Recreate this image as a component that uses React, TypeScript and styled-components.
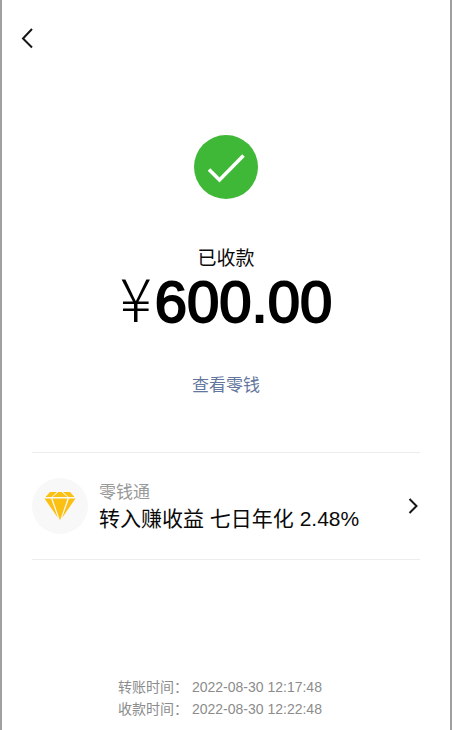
import React from "react";
import styled, { createGlobalStyle } from "styled-components";

const GlobalStyle = createGlobalStyle`
  *, *::before, *::after { box-sizing: border-box; }
  body {
    margin: 0;
    background: #fff;
    color: #0a0a0a;
    font-family: "Liberation Sans", "Noto Sans CJK SC", sans-serif;
  }
`;

const Screen = styled.main`
  display: flex;
  flex-direction: column;
  min-height: 100vh;
  padding: 0 30px 10px;
  border: solid #a0a0a0;
  border-width: 0 2px;
`;

const NavBar = styled.nav`
  display: flex;
  height: 76px;
  margin-left: -16px;
  align-items: center;
`;

const BackButton = styled.button`
  display: flex;
  padding: 4px;
  border: 0;
  background: none;
  color: #161616;
  cursor: pointer;
`;

const Result = styled.section`
  display: flex;
  flex-direction: column;
  align-items: center;
  padding: 58px 0 54px;
`;

const Status = styled.h1`
  margin: 47px 0 0;
  font-size: 19px;
  font-weight: 400;
  line-height: 24px;
`;

const Amount = styled.p`
  display: flex;
  align-items: baseline;
  gap: 3px;
  margin: 0;
  color: #000;
  font-size: 58px;
  line-height: 50px;
`;

const Currency = styled.span`
  font-family: "Noto Sans CJK SC", sans-serif;
  font-size: 60px;
  font-weight: 300;
`;

const Figure = styled.span`
  -webkit-text-stroke: 2px currentColor;
`;

const BalanceLink = styled.a`
  margin-top: 47px;
  color: #63769d;
  font-size: 17px;
  line-height: 24px;
  text-decoration: none;
`;

const Promo = styled.a`
  display: flex;
  align-items: center;
  min-height: 108px;
  border: solid #ededed;
  border-width: 1px 0;
  color: inherit;
  text-decoration: none;
`;

const Badge = styled.span`
  display: flex;
  flex: none;
  align-items: center;
  justify-content: center;
  width: 56px;
  height: 56px;
  border-radius: 50%;
  background: #f8f8f8;
`;

const PromoText = styled.span`
  display: flex;
  flex: 1;
  flex-direction: column;
  margin-left: 11px;
  padding-top: 4px;
`;

const PromoName = styled.span`
  color: #999;
  font-size: 17px;
  line-height: 22px;
`;

const PromoTitle = styled.span`
  font-size: 21px;
  line-height: 30px;
`;

const Times = styled.footer`
  display: flex;
  flex-direction: column;
  align-items: center;
  margin-top: auto;
  padding-right: 12px;
  color: #8c8c8c;
  font-size: 14px;
  line-height: 22px;
`;

const times = [
  { label: "转账时间", value: "2022-08-30 12:17:48" },
  { label: "收款时间", value: "2022-08-30 12:22:48" },
];

export default function App() {
  return (
    <>
      <GlobalStyle />
      <Screen>
        <NavBar>
          <BackButton type="button" aria-label="返回">
            <svg width="14" height="22" viewBox="0 0 14 22" fill="none" stroke="currentColor" strokeWidth="2">
              <path d="M12 2 3 11.500l9 9" />
            </svg>
          </BackButton>
        </NavBar>
        <Result>
          <svg width="66" height="66" viewBox="0 0 66 66" aria-hidden="true">
            <circle cx="33" cy="33" r="32" fill="#40b837" />
            <path d="M16 35.500 26.500 46 50.500 21.500" fill="none" stroke="#fff" strokeWidth="3.600" />
          </svg>
          <Status>已收款</Status>
          <Amount>
            <Currency>¥</Currency>
            <Figure>600.00</Figure>
          </Amount>
          <BalanceLink href="#balance">查看零钱</BalanceLink>
        </Result>
        <Promo href="#fund">
          <Badge>
            <svg width="32" height="30" viewBox="0 0 32 30" fill="#fbc012" aria-hidden="true">
              <path d="M6 1h7L7.500 6H1.500zM14.500 1h3l6 5h-15zM19 1h7l4.500 5h-6zM.500 7.500H7L14 27zM8.500 7.500h15L16 29.500zM25 7.500h6.500L18 27z" />
            </svg>
          </Badge>
          <PromoText>
            <PromoName>零钱通</PromoName>
            <PromoTitle>转入赚收益 七日年化 2.48%</PromoTitle>
          </PromoText>
          <svg width="12" height="18" viewBox="0 0 12 18" fill="none" stroke="#161616" strokeWidth="2" aria-hidden="true">
            <path d="M1.500 2 8.500 9l-7 7" />
          </svg>
        </Promo>
        <Times>
          {times.map((time) => (
            <span key={time.label}>
              {time.label}{"\uFF1A"} <time>{time.value}</time>
            </span>
          ))}
        </Times>
      </Screen>
    </>
  );
}
